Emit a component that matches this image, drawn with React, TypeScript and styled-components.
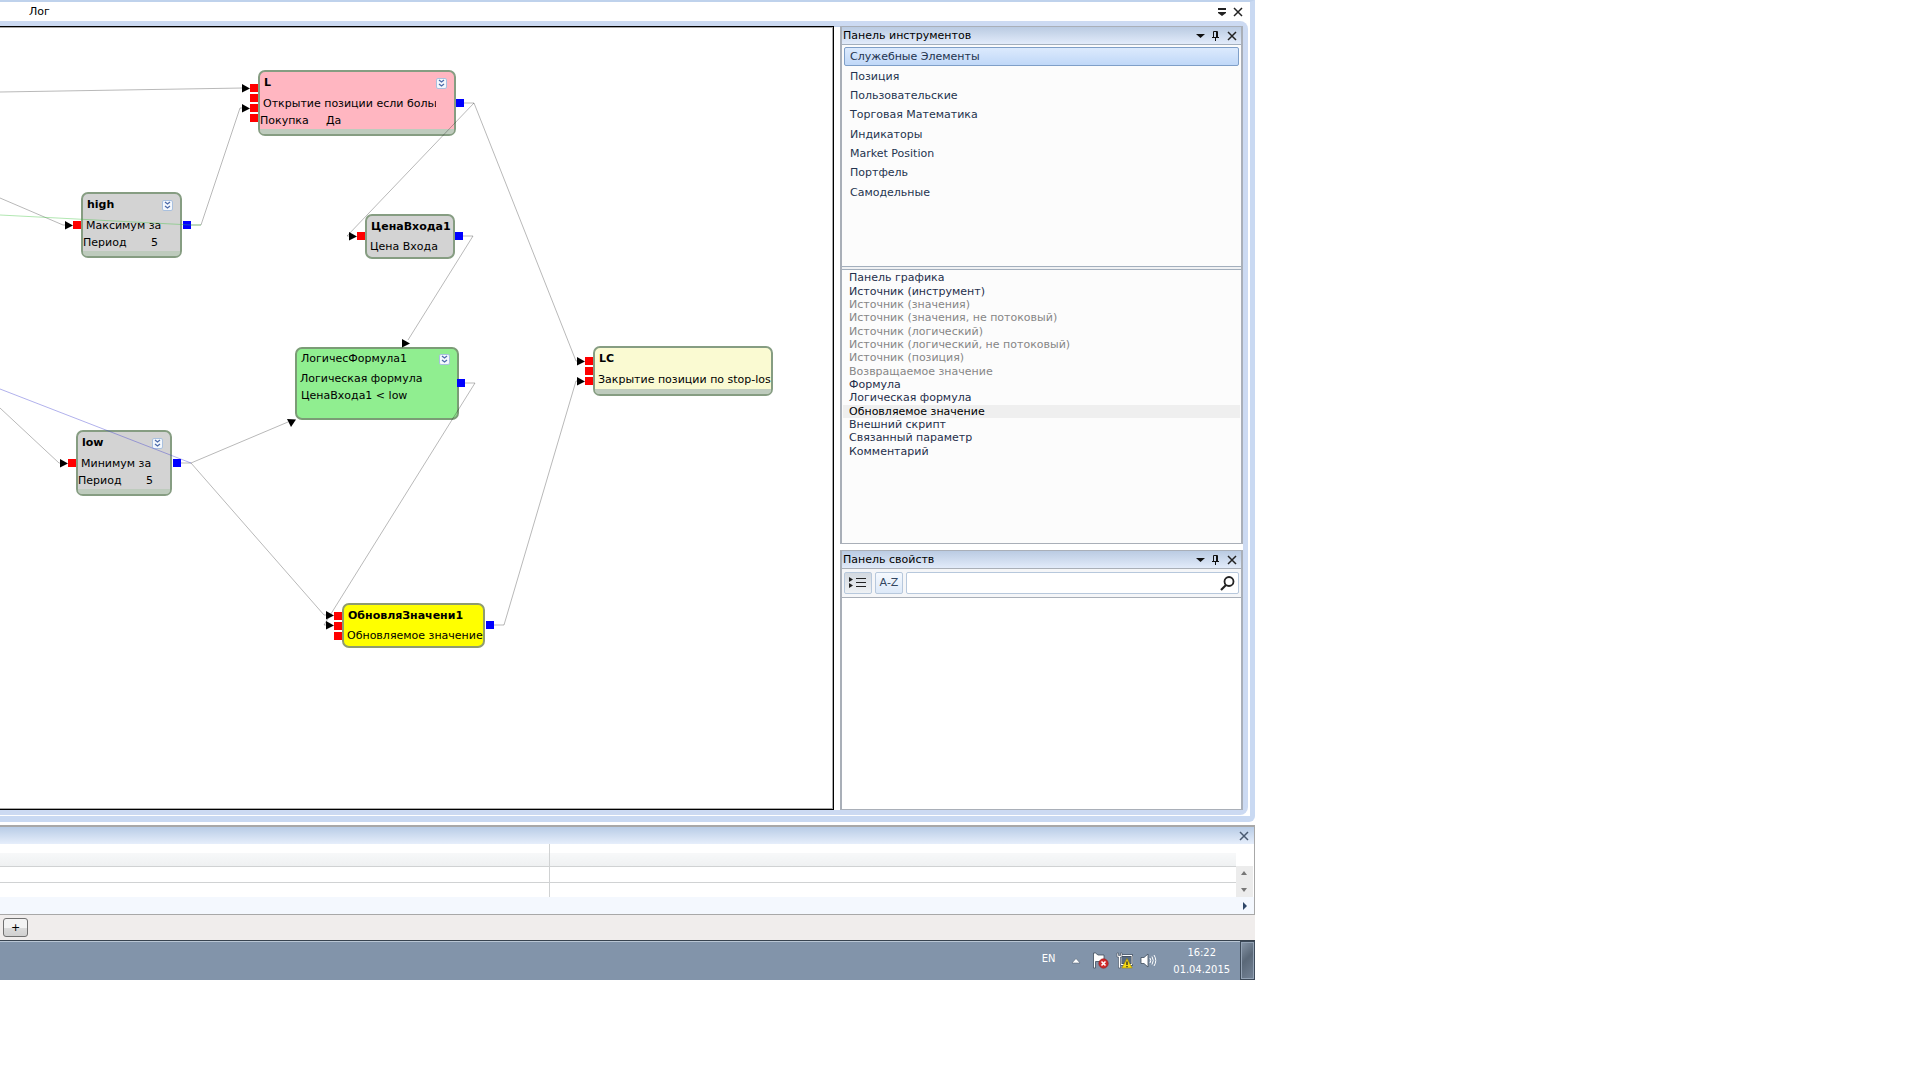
import React from "react";
import styled, { createGlobalStyle } from "styled-components";

const GlobalStyle = createGlobalStyle`
  *, *::before, *::after { box-sizing: border-box; }
  body {
    margin: 0;
    background: #fff;
    color: #000;
    font: 11px/14px Verdana, "DejaVu Sans", sans-serif;
  }
  button, input { font: inherit; color: inherit; margin: 0; padding: 0; border: 0; background: none; }
  ul { list-style: none; margin: 0; padding: 0; }
`;

const Desktop = styled.div`
  width: 100%;
  max-width: 1255px;
`;

/* ---------- main window ---------- */

const MainWindow = styled.main`
  display: flex;
  flex-direction: column;
  padding-right: 2px;
  padding-bottom: 1px;
  border: solid #c9d9f2;
  border-width: 2px 5px 6px 0;
  border-top-color: #bfd2ec;
  border-radius: 0 0 6px 0;
`;

const TabStrip = styled.header`
  display: flex;
  align-items: center;
  height: 19px;
  padding: 0 2px 0 29px;
`;

const TabButton = styled.button`
  line-height: 14px;
`;

const Spacer = styled.div`
  flex: 1;
`;

const IconButton = styled.button`
  display: grid;
  place-items: center;
  width: 16px;
  height: 16px;
  svg { display: block; }
`;

const Workspace = styled.div`
  display: flex;
  gap: 6px;
  border: solid #ccdaf2;
  border-width: 5px 5px 5px 0;
  border-radius: 0 8px 8px 0;
  box-shadow: inset 0 1px 0 #b9cbe6, inset -1px 0 0 #fff;
  background: #fff;
`;

const Canvas = styled.section`
  position: relative;
  flex: 1;
  min-width: 0;
  min-height: 784px;
  overflow: hidden;
  border: solid #000;
  border-width: 1px 1px 1px 0;
  box-shadow: inset -1px 1px 0 #a8a8a8, inset 0 -1px 0 #a8a8a8;
`;

const Wires = styled.svg`
  position: absolute;
  inset: 0;
  width: 100%;
  height: 100%;
  pointer-events: none;
`;

/* ---------- diagram nodes ---------- */

const NodeBox = styled.article<{ $x: number; $y: number; $w: number; $h: number; $fill: string; $edge: string }>`
  position: absolute;
  left: ${(p) => p.$x}px;
  top: ${(p) => p.$y}px;
  width: ${(p) => p.$w}px;
  height: ${(p) => p.$h}px;
  display: flex;
  flex-direction: column;
  border: 2px solid ${(p) => p.$edge};
  border-radius: 7px;
  background: ${(p) => p.$fill};
  white-space: nowrap;
`;

const NodeHead = styled.div<{ $tall: boolean }>`
  display: flex;
  align-items: center;
  justify-content: space-between;
  height: ${(p) => (p.$tall ? 22 : 20)}px;
  padding: 0 7px 0 4px;
`;

const NodeTitle = styled.h3<{ $plain?: boolean }>`
  margin: 0;
  font-size: 11px;
  line-height: 20px;
  font-weight: ${(p) => (p.$plain ? 400 : 700)};
`;

const NodeKind = styled.div<{ $inset: number }>`
  overflow: hidden;
  margin-right: ${(p) => p.$inset}px;
  padding-left: 3px;
  line-height: 20px;
`;

const NodeParam = styled.div<{ $columns: string; $indent: number }>`
  display: grid;
  grid-template-columns: ${(p) => p.$columns};
  padding-left: ${(p) => p.$indent}px;
  line-height: 14px;
`;

const NodeFooter = styled.div`
  height: 5px;
  margin-top: auto;
  border-radius: 0 0 4px 4px;
  background: #becbbd;
`;

const ExpandButton = styled.button`
  display: grid;
  place-items: center;
  width: 11px;
  height: 11px;
  border: 1px solid #a9c0de;
  border-radius: 2px;
  background: #f4f8fd;
`;

const Port = styled.span<{ $x: number; $y: number; $out?: boolean }>`
  position: absolute;
  left: ${(p) => p.$x}px;
  top: ${(p) => p.$y}px;
  width: 8px;
  height: 8px;
  background: ${(p) => (p.$out ? "#00f" : "#f00")};
`;

/* ---------- right-hand panels ---------- */

const Sidebar = styled.aside`
  display: flex;
  flex-direction: column;
  width: 403px;
`;

const Panel = styled.section<{ $grow?: boolean }>`
  display: flex;
  flex-direction: column;
  flex: ${(p) => (p.$grow ? 1 : "none")};
  border: solid #a9afb8;
  border-width: 1px 2px;
  & + & { margin-top: 6px; }
`;

const PanelHeader = styled.header`
  display: flex;
  align-items: center;
  height: 17px;
  padding: 0 1px;
  background: linear-gradient(#bacbe2, #e2ebfa);
`;

const PanelTitle = styled.h2`
  flex: 1;
  margin: 0;
  font-size: 11px;
  line-height: 17px;
  font-weight: 400;
`;

const GroupList = styled.ul`
  display: grid;
  grid-template-rows: repeat(8, 1fr);
  height: 155px;
  margin: 2px 2px 64px;
`;

const GroupButton = styled.button<{ $selected?: boolean }>`
  display: block;
  width: 100%;
  height: 100%;
  padding: 0 5px;
  border: 1px solid ${(p) => (p.$selected ? "#7f9fc8" : "transparent")};
  border-radius: 2px;
  background: ${(p) => (p.$selected ? "linear-gradient(#dceafd, #c0d8f8)" : "none")};
  color: #24344f;
  line-height: 17px;
  text-align: left;
`;

const ListArea = styled.div`
  border-top: 1px solid #a3afbd;
  background: #fcfcfc;
`;

const Splitter = styled.div`
  height: 3px;
  border-top: 1px solid #a3afbd;
  background: #f0f1f3;
`;

const ElementList = styled.ul`
  display: grid;
  grid-template-rows: repeat(14, 1fr);
  height: 187px;
  margin: 1px 1px 85px;
`;

const ElementButton = styled.button<{ $hover?: boolean }>`
  display: block;
  width: 100%;
  height: 100%;
  padding: 0 6px;
  background: ${(p) => (p.$hover ? "#efefef" : "none")};
  color: ${(p) => (p.$hover ? "#000" : "#1f2f4b")};
  line-height: 13px;
  text-align: left;
  &:disabled { color: #868686; }
`;

const PropertyTools = styled.div`
  display: flex;
  gap: 3px;
  height: 30px;
  padding: 3px 2px;
  border: solid #a9afb8;
  border-width: 1px 0;
  background: #f5f6f8;
`;

const ToolButton = styled.button<{ $pressed?: boolean }>`
  display: grid;
  place-items: center;
  width: 28px;
  border: 1px solid #b7c8dc;
  border-radius: 2px;
  background: ${(p) => (p.$pressed ? "linear-gradient(#d3d9e0, #eef1f4)" : "linear-gradient(#f5f9fe, #dde9f8)")};
  color: #33465f;
`;

const SearchBox = styled.label`
  display: flex;
  flex: 1;
  align-items: center;
  padding-right: 3px;
  border: 1px solid #b7c8dc;
  border-radius: 2px;
  background: #fff;
`;

const SearchInput = styled.input`
  flex: 1;
  min-width: 0;
  padding-left: 4px;
  outline: 0;
`;

/* ---------- bottom log panel ---------- */

const LogPanel = styled.section`
  margin-top: 3px;
  border: solid #a8a8a8;
  border-width: 2px 1px 1px 0;
  background: #fff;
`;

const LogHeader = styled.header`
  display: flex;
  align-items: center;
  justify-content: flex-end;
  height: 17px;
  padding-right: 2px;
  background: linear-gradient(#b8cce6, #e6eefb);
`;

const LogBody = styled.div`
  display: flex;
`;

const LogTable = styled.table`
  flex: 1;
  width: 100%;
  border-collapse: collapse;
  table-layout: fixed;
  th { height: 22px; padding: 0; background: linear-gradient(#fff 40%, #f7f8f9 42%, #eff1f2); border-bottom: 1px solid #d0d2d3; }
  td { height: 16px; padding: 0; border-bottom: 1px solid #d0d2d3; }
  tr:last-child td { height: 15px; border-bottom: 0; }
  th + th, td + td { border-left: 1px solid #d0d2d3; }
`;

const FirstColumn = styled.col`
  width: 549px;
`;

const VerticalScroll = styled.div`
  display: flex;
  flex-direction: column;
  justify-content: space-between;
  width: 17px;
  margin: 22px 1px 0 0;
  background: #ececec;
`;

const HorizontalScroll = styled.div`
  display: flex;
  align-items: center;
  justify-content: flex-end;
  height: 17px;
  padding-right: 1px;
  background: #f4f8fe;
`;

const SheetBar = styled.nav`
  display: flex;
  align-items: center;
  height: 25px;
  padding: 0 3px;
  background: #f0edec;
`;

const AddButton = styled.button`
  width: 25px;
  height: 19px;
  border: 1px solid #707070;
  border-radius: 3px;
  background: linear-gradient(#f3f3f3 50%, #dcdcdc 50%, #d0d0d0);
  line-height: 17px;
`;

/* ---------- taskbar ---------- */

const Taskbar = styled.footer`
  display: flex;
  align-items: center;
  justify-content: flex-end;
  height: 40px;
  border-top: 1px solid #38434f;
  box-shadow: inset 0 1px 0 #b9c6d4;
  background: #8294aa;
  color: #fff;
  font-family: Tahoma, "DejaVu Sans Condensed", "DejaVu Sans", sans-serif;
`;

const Language = styled.button`
  margin: 0 16px 4px 0;
`;

const Tray = styled.div`
  display: flex;
  align-items: center;
  gap: 7px;
  svg { display: block; }
`;

const TrayButton = styled.button`
  display: block;
  &:first-child { margin-right: 4px; }
`;

const Clock = styled.time`
  padding: 0 10px 0 16px;
  line-height: 17px;
  text-align: center;
`;

const ShowDesktop = styled.button`
  width: 15px;
  height: 39px;
  border: 1px solid #3d4a59;
  background: linear-gradient(135deg, #8796a8, #5a6878 45%, #748396);
  box-shadow: inset 0 0 0 1px #94a3b5;
`;

/* ---------- icons ---------- */

const CloseIcon = ({ color = "#222" }: { color?: string }) => (
  <svg width="10" height="10" viewBox="0 0 10 10" fill="none" stroke={color} strokeWidth="1.5">
    <path d="M1 1l8 8M9 1L1 9" />
  </svg>
);

const MenuIcon = () => (
  <svg width="10" height="10" viewBox="0 0 10 10" fill="#222">
    <path d="M1 1h8v2H1zM1 5h8v1L5 9 1 6z" />
  </svg>
);

const DropIcon = () => (
  <svg width="10" height="6" viewBox="0 0 10 6" fill="#111">
    <path d="M1 1h9L5.500 5z" />
  </svg>
);

const PinIcon = () => (
  <svg width="8" height="10" viewBox="0 0 8 10" fill="none" stroke="#111">
    <path d="M1.500 6.500v-6h4v6M4.500 .5v6M0 6.500h7M3.500 7v3" />
  </svg>
);

const ChevronsIcon = () => (
  <svg width="7" height="9" viewBox="0 0 7 9" fill="none" stroke="#4d6bab" strokeWidth="1.300">
    <path d="M1 1l2.500 2L6 1M1 5l2.500 2L6 5" />
  </svg>
);

const CategoryIcon = () => (
  <svg width="18" height="12" viewBox="0 0 18 12">
    <path d="M0 0l4 2.500L0 5zM0 6l4 2.500L0 11z" fill="#222" />
    <path d="M7 1.500h10M7 5.500h10M7 9.500h10" stroke="#222" />
  </svg>
);

const SearchIcon = () => (
  <svg width="15" height="15" viewBox="0 0 15 15" fill="none" stroke="#222">
    <circle cx="9" cy="5.500" r="4.500" strokeWidth="1.800" />
    <path d="M6 9l-5 5" strokeWidth="2.200" />
  </svg>
);

const ScrollIcon = ({ d, color = "#777" }: { d: string; color?: string }) => (
  <svg width="16" height="14" viewBox="0 0 16 14" fill={color}>
    <path d={d} />
  </svg>
);

const FlagIcon = () => (
  <svg width="17" height="17" viewBox="0 0 17 17">
    <path d="M1.500 1v15h2V9.500h8.500V3H6L3.500 1z" fill="#fff" stroke="#3f4c5c" strokeWidth=".8" />
    <circle cx="11.500" cy="11.500" r="4.700" fill="#d22b2b" stroke="#8d1515" strokeWidth=".6" />
    <path d="M9.500 9.500l4 4M13.500 9.500l-4 4" stroke="#fff" strokeWidth="1.600" />
  </svg>
);

const NetworkIcon = () => (
  <svg width="17" height="17" viewBox="0 0 17 17">
    <path d="M5 3.500h11v9H5z" fill="#596b80" stroke="#2f3b49" strokeWidth="2" />
    <path d="M5 3.500h11v9H5z" fill="none" stroke="#fff" />
    <path d="M1 1v4h1.500v11h2V5H6V1H4.500v2.500h-2V1z" fill="#fff" stroke="#3f4c5c" strokeWidth=".6" />
    <path d="M11 6.500l5.200 9.500H5.800z" fill="#f4d816" stroke="#a08600" strokeWidth=".6" />
    <path d="M11 9.500v3.500M11 14v1.200" stroke="#222" strokeWidth="1.300" />
  </svg>
);

const SpeakerIcon = () => (
  <svg width="17" height="15" viewBox="0 0 17 15" fill="none">
    <path d="M1 4.500h3L8 1v13l-4-3.500H1z" fill="#fff" stroke="#3f4c5c" strokeWidth=".8" />
    <path d="M10 5q1.500 2.500 0 5M12 3.500q2.500 4 0 8M14 2q3.500 5.500 0 11" stroke="#fff" />
  </svg>
);

const TrayArrow = () => (
  <svg width="10" height="6" viewBox="0 0 10 6">
    <path d="M5 .5L9 5H1z" fill="#fff" stroke="#4c5a6b" strokeWidth=".5" />
  </svg>
);

/* ---------- data ---------- */

interface DiagramNode {
  title: string;
  kind: string;
  x: number;
  y: number;
  w: number;
  h: number;
  fill: string;
  edge?: string;
  plain?: boolean;
  expand?: boolean;
  footer?: boolean;
  clip?: number;
  params?: string[];
  columns?: string;
  indent?: number;
  inputs?: number[];
  output?: [number, number];
}

const nodes: DiagramNode[] = [
  { title: "L", kind: "Открытие позиции если больш", x: 258, y: 43, w: 198, h: 66, fill: "#ffb6c1", expand: true, footer: true, clip: 18, params: ["Покупка", "Да"], columns: "66px 1fr", inputs: [57, 67, 77, 87], output: [456, 72] },
  { title: "high", kind: "Максимум за", x: 81, y: 165, w: 101, h: 66, fill: "#d3d3d3", expand: true, footer: true, params: ["Период", "5"], columns: "68px 1fr", inputs: [194], output: [183, 194] },
  { title: "ЦенаВхода1", kind: "Цена Входа", x: 365, y: 187, w: 90, h: 45, fill: "#d3d3d3", inputs: [205], output: [455, 205] },
  { title: "ЛогичесФормула1", kind: "Логическая формула", x: 295, y: 320, w: 164, h: 73, fill: "#90ee90", edge: "#7b9c76", plain: true, expand: true, params: ["ЦенаВхода1 < low"], columns: "1fr", indent: 4, output: [457, 352] },
  { title: "low", kind: "Минимум за", x: 76, y: 403, w: 96, h: 66, fill: "#d3d3d3", expand: true, footer: true, params: ["Период", "5"], columns: "68px 1fr", inputs: [432], output: [173, 432] },
  { title: "LC", kind: "Закрытие позиции по stop-los", x: 593, y: 319, w: 180, h: 50, fill: "#fafad2", footer: true, inputs: [330, 340, 350] },
  { title: "ОбновляЗначени1", kind: "Обновляемое значение", x: 342, y: 576, w: 143, h: 45, fill: "#ffff00", edge: "#8f9c6f", inputs: [585, 595, 605], output: [486, 594] },
];

const wires = [
  "M0 65L243 61",
  "M0 171L63 198H67",
  "M191 198H201L240 81H244",
  "M464 76H474L347 209H351",
  "M474 76L576 334H579",
  "M463 209H473L408 313",
  "M181 436H191L288 395",
  "M191 436L324 588H328",
  "M0 381L59 436H62",
  "M465 356H475L324 598H328",
  "M494 598H504L576 354H579",
];

const arrows: [number, number][] = [
  [242, 61], [242, 81], [65, 198], [349, 209], [60, 436], [577, 334], [577, 354], [326, 588], [326, 598], [402, 316],
];

const groups = ["Служебные Элементы", "Позиция", "Пользовательские", "Торговая Математика", "Индикаторы", "Market Position", "Портфель", "Самодельные"];

const elements: { name: string; disabled?: boolean; hover?: boolean }[] = [
  { name: "Панель графика" },
  { name: "Источник (инструмент)" },
  { name: "Источник (значения)", disabled: true },
  { name: "Источник (значения, не потоковый)", disabled: true },
  { name: "Источник (логический)", disabled: true },
  { name: "Источник (логический, не потоковый)", disabled: true },
  { name: "Источник (позиция)", disabled: true },
  { name: "Возвращаемое значение", disabled: true },
  { name: "Формула" },
  { name: "Логическая формула" },
  { name: "Обновляемое значение", hover: true },
  { name: "Внешний скрипт" },
  { name: "Связанный параметр" },
  { name: "Комментарий" },
];

/* ---------- parts ---------- */

const DiagramNodeView = ({ node }: { node: DiagramNode }) => (
  <>
    <NodeBox $x={node.x} $y={node.y} $w={node.w} $h={node.h} $fill={node.fill} $edge={node.edge ?? "#869d82"}>
      <NodeHead $tall={!node.plain}>
        <NodeTitle $plain={node.plain}>{node.title}</NodeTitle>
        {node.expand && <ExpandButton aria-label="Развернуть"><ChevronsIcon /></ExpandButton>}
      </NodeHead>
      <NodeKind $inset={node.clip ?? 0}>{node.kind}</NodeKind>
      {node.params && (
        <NodeParam $columns={node.columns ?? "1fr"} $indent={node.indent ?? 0}>
          {node.params.map((text) => <span key={text}>{text}</span>)}
        </NodeParam>
      )}
      {node.footer && <NodeFooter />}
    </NodeBox>
    {node.inputs?.map((y) => <Port key={y} $x={node.x - 8} $y={y} />)}
    {node.output && <Port $out $x={node.output[0]} $y={node.output[1]} />}
  </>
);

const PanelBar = ({ title }: { title: string }) => (
  <PanelHeader>
    <PanelTitle>{title}</PanelTitle>
    <IconButton aria-label="Меню"><DropIcon /></IconButton>
    <IconButton aria-label="Закрепить"><PinIcon /></IconButton>
    <IconButton aria-label="Закрыть"><CloseIcon /></IconButton>
  </PanelHeader>
);

export default function App() {
  return (
    <Desktop>
      <GlobalStyle />
      <MainWindow>
        <TabStrip>
          <TabButton>Лог</TabButton>
          <Spacer />
          <IconButton aria-label="Список вкладок"><MenuIcon /></IconButton>
          <IconButton aria-label="Закрыть"><CloseIcon /></IconButton>
        </TabStrip>
        <Workspace>
          <Canvas>
            {nodes.map((node) => <DiagramNodeView key={node.title} node={node} />)}
            <Wires aria-hidden="true">
              <g fill="none" stroke="#000" strokeOpacity=".28">
                {wires.map((d) => <path key={d} d={d} />)}
                <path d="M0 188L191 198H201" stroke="#3fc23f" strokeOpacity=".4" />
                <path d="M0 362L191 436" stroke="#3c3cd0" strokeOpacity=".4" />
              </g>
              <g fill="#000">
                {arrows.map(([x, y]) => <path key={`${x}-${y}`} d={`M${x} ${y - 4}l8 4.500l-8 4z`} />)}
                <path d="M287 392l9 0.500l-5 7.500z" />
              </g>
            </Wires>
          </Canvas>
          <Sidebar>
            <Panel>
              <PanelBar title="Панель инструментов" />
              <ListArea>
                <GroupList>
                  {groups.map((name, i) => (
                    <li key={name}><GroupButton $selected={i === 0}>{name}</GroupButton></li>
                  ))}
                </GroupList>
              </ListArea>
              <Splitter />
              <ListArea>
                <ElementList>
                  {elements.map((item) => (
                    <li key={item.name}>
                      <ElementButton disabled={item.disabled} $hover={item.hover}>{item.name}</ElementButton>
                    </li>
                  ))}
                </ElementList>
              </ListArea>
            </Panel>
            <Panel $grow>
              <PanelBar title="Панель свойств" />
              <PropertyTools>
                <ToolButton $pressed aria-label="По категориям"><CategoryIcon /></ToolButton>
                <ToolButton>A-Z</ToolButton>
                <SearchBox>
                  <SearchInput type="text" aria-label="Поиск" />
                  <SearchIcon />
                </SearchBox>
              </PropertyTools>
            </Panel>
          </Sidebar>
        </Workspace>
      </MainWindow>
      <LogPanel>
        <LogHeader>
          <IconButton aria-label="Закрыть"><CloseIcon color="#4a5a70" /></IconButton>
        </LogHeader>
        <LogBody>
          <LogTable>
            <colgroup><FirstColumn /><col /></colgroup>
            <thead><tr><th /><th /></tr></thead>
            <tbody>
              <tr><td /><td /></tr>
              <tr><td /><td /></tr>
            </tbody>
          </LogTable>
          <VerticalScroll>
            <ScrollIcon d="M5 9l3-4 3 4z" />
            <ScrollIcon d="M5 5h6L8 9z" />
          </VerticalScroll>
        </LogBody>
        <HorizontalScroll><ScrollIcon d="M6 3l4 4-4 4z" color="#2f4768" /></HorizontalScroll>
      </LogPanel>
      <SheetBar><AddButton aria-label="Добавить">+</AddButton></SheetBar>
      <Taskbar>
        <Language>EN</Language>
        <Tray>
          <TrayButton aria-label="Скрытые значки"><TrayArrow /></TrayButton>
          <TrayButton aria-label="Центр поддержки"><FlagIcon /></TrayButton>
          <TrayButton aria-label="Сеть"><NetworkIcon /></TrayButton>
          <TrayButton aria-label="Громкость"><SpeakerIcon /></TrayButton>
        </Tray>
        <Clock dateTime="2015-04-01T16:22">16:22<br />01.04.2015</Clock>
        <ShowDesktop aria-label="Свернуть все окна" />
      </Taskbar>
    </Desktop>
  );
}
